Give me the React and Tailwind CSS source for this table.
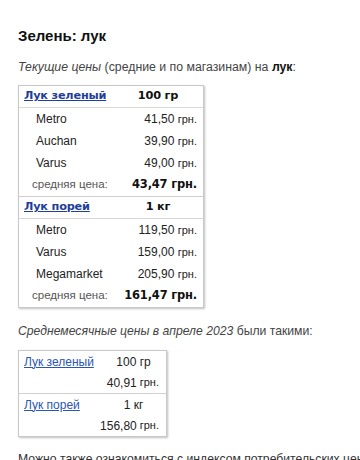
const current = [
  {
    name: 'Лук зеленый',
    unit: '100 гр',
    shops: [
      ['Metro', '41,50'],
      ['Auchan', '39,90'],
      ['Varus', '49,00'],
    ],
    avg: '43,47',
  },
  {
    name: 'Лук порей',
    unit: '1 кг',
    shops: [
      ['Metro', '119,50'],
      ['Varus', '159,00'],
      ['Megamarket', '205,90'],
    ],
    avg: '161,47',
  },
]

const monthly = [
  { name: 'Лук зеленый', unit: '100 гр', price: '40,91' },
  { name: 'Лук порей', unit: '1 кг', price: '156,80' },
]

const sans = "font-['Liberation_Sans',Arial,sans-serif]"
const wide = "font-['DejaVu_Sans',Verdana,sans-serif]"

export default function App() {
  return (
    <div className={`h-[460px] w-[360px] overflow-hidden bg-white px-[18px] pt-[29px] text-[#333] ${sans}`}>
      <h2 className="text-[15px] font-bold leading-[14px] text-[#111]">Зелень: лук</h2>

      <p className="mt-[17px] text-[12.3px] leading-[15px] text-[#444]">
        <i>Текущие цены</i> (средние и по магазинам) на <b className="text-[#111]">лук</b>:
      </p>

      <div className="mt-[10px] w-[186px] border border-[#c8c8c8] shadow-[1px_1px_2px_rgba(0,0,0,0.25)]">
        {current.map((g, i) => (
          <div key={g.name} className={i < current.length - 1 ? 'border-b border-[#d0d0d0]' : ''}>
            <div className={`grid h-[22px] grid-cols-[94px_1fr] items-center border-b border-[#d8d8d8] ${wide} text-[11.3px] font-bold tracking-[-0.2px]`}>
              <a href="#" className="whitespace-nowrap pl-[5px] text-[#1f3f9a] underline">{g.name}</a>
              <span className="whitespace-nowrap text-center text-[#111]">{g.unit}</span>
            </div>
            {g.shops.map(([shop, price]) => (
              <div key={shop} className="flex h-[22px] items-center justify-between pl-[17px] pr-[6px] text-[12px]">
                <span className="text-[#222]">{shop}</span>
                <span className="text-[#222]">
                  {price} <span className="text-[11px]">грн.</span>
                </span>
              </div>
            ))}
            <div className="flex h-[22px] items-center justify-between pl-[13px] pr-[6px]">
              <span className="text-[11.5px] text-[#555]">средняя цена:</span>
              <span className={`${wide} whitespace-nowrap text-[11.5px] font-bold tracking-[-0.2px] text-[#111]`}>{g.avg} грн.</span>
            </div>
          </div>
        ))}
      </div>

      <p className="mt-[16px] text-[12.2px] leading-[15px] text-[#444]">
        <i>Среднемесячные цены в апреле 2023</i> были такими:
      </p>

      <div className="mt-[11px] w-[149px] border border-[#c8c8c8] shadow-[1px_1px_2px_rgba(0,0,0,0.25)] text-[12px]">
        {monthly.map((m, i) => (
          <div key={m.name} className={i < monthly.length - 1 ? 'border-b border-[#d0d0d0]' : ''}>
            <div className="grid h-[21px] grid-cols-[82px_1fr] items-center">
              <a href="#" className="whitespace-nowrap pl-[5px] text-[#2a56b0] underline">{m.name}</a>
              <span className="text-center text-[#222]">{m.unit}</span>
            </div>
            <div className="flex h-[21px] items-center justify-end pr-[7px] text-[#222]">
              {m.price} <span className="ml-[3px] text-[11px]">грн.</span>
            </div>
          </div>
        ))}
      </div>

      <p className="mt-[15px] whitespace-nowrap text-[12.2px] leading-[15px] text-[#333]">
        Можно также ознакомиться с индексом потребительских цен на продукты.
      </p>
    </div>
  )
}
